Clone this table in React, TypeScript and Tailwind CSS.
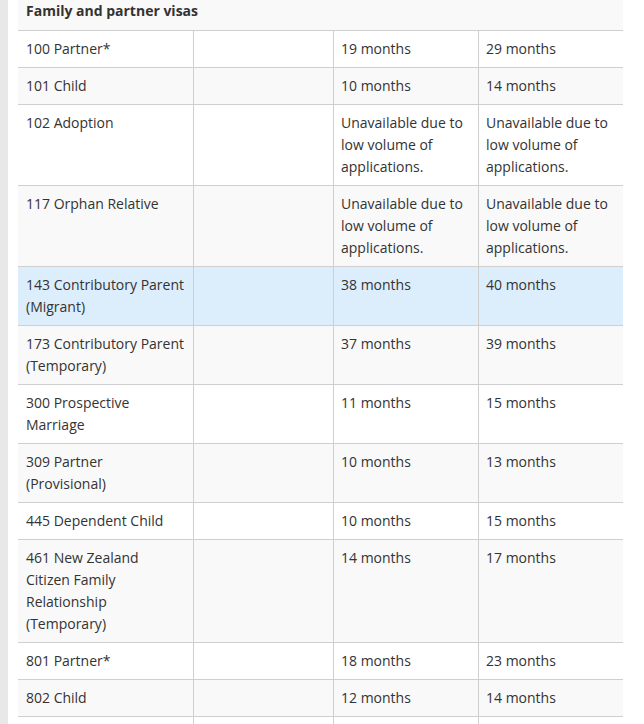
const rows: { visa: string; a: string; b: string; hover?: boolean }[] = [
  { visa: "100 Partner*", a: "19 months", b: "29 months" },
  { visa: "101 Child", a: "10 months", b: "14 months" },
  { visa: "102 Adoption", a: "Unavailable due to low volume of applications.", b: "Unavailable due to low volume of applications." },
  { visa: "117 Orphan Relative", a: "Unavailable due to low volume of applications.", b: "Unavailable due to low volume of applications." },
  { visa: "143 Contributory Parent (Migrant)", a: "38 months", b: "40 months", hover: true },
  { visa: "173 Contributory Parent (Temporary)", a: "37 months", b: "39 months" },
  { visa: "300 Prospective Marriage", a: "11 months", b: "15 months" },
  { visa: "309 Partner (Provisional)", a: "10 months", b: "13 months" },
  { visa: "445 Dependent Child", a: "10 months", b: "15 months" },
  { visa: "461 New Zealand Citizen Family Relationship (Temporary)", a: "14 months", b: "17 months" },
  { visa: "801 Partner*", a: "18 months", b: "23 months" },
  { visa: "802 Child", a: "12 months", b: "14 months" },
];

const App = () => {
  return (
    <div className="flex h-screen overflow-hidden bg-white text-[14px] leading-[22px] text-[#333333] font-['Open_Sans',sans-serif]">
      <div className="w-2 shrink-0 bg-[#e8e8e8]" />
      <div className="ml-[10px] w-[605px] shrink-0">
        <div className="h-[31px] border-b border-[#cfcfcf] bg-[#f9f9f9] pl-2 font-bold">
          Family and partner visas
        </div>
        {rows.map((r, i) => {
          const bg = r.hover ? "bg-[#dcedfc]" : i % 2 === 1 ? "bg-[#f9f9f9]" : "bg-white";
          return (
            <div key={r.visa} className={`grid grid-cols-[175px_140px_145px_145px] border-b border-[#cfcfcf] ${bg}`}>
              <div className="px-2 py-[7px]">{r.visa}</div>
              <div className="border-l border-[#cfcfcf] py-[7px] pl-[7px]" />
              <div className="border-l border-[#cfcfcf] py-[7px] pl-[7px] pr-2">{r.a}</div>
              <div className="border-l border-[#cfcfcf] py-[7px] pl-[7px] pr-2">{r.b}</div>
            </div>
          );
        })}
        {/* next row, scrolled below the fold */}
        <div className="grid h-9 grid-cols-[175px_140px_145px_145px] bg-white">
          <div />
          <div className="border-l border-[#cfcfcf]" />
          <div className="border-l border-[#cfcfcf]" />
          <div className="border-l border-[#cfcfcf]" />
        </div>
      </div>
    </div>
  );
};

export default App;
